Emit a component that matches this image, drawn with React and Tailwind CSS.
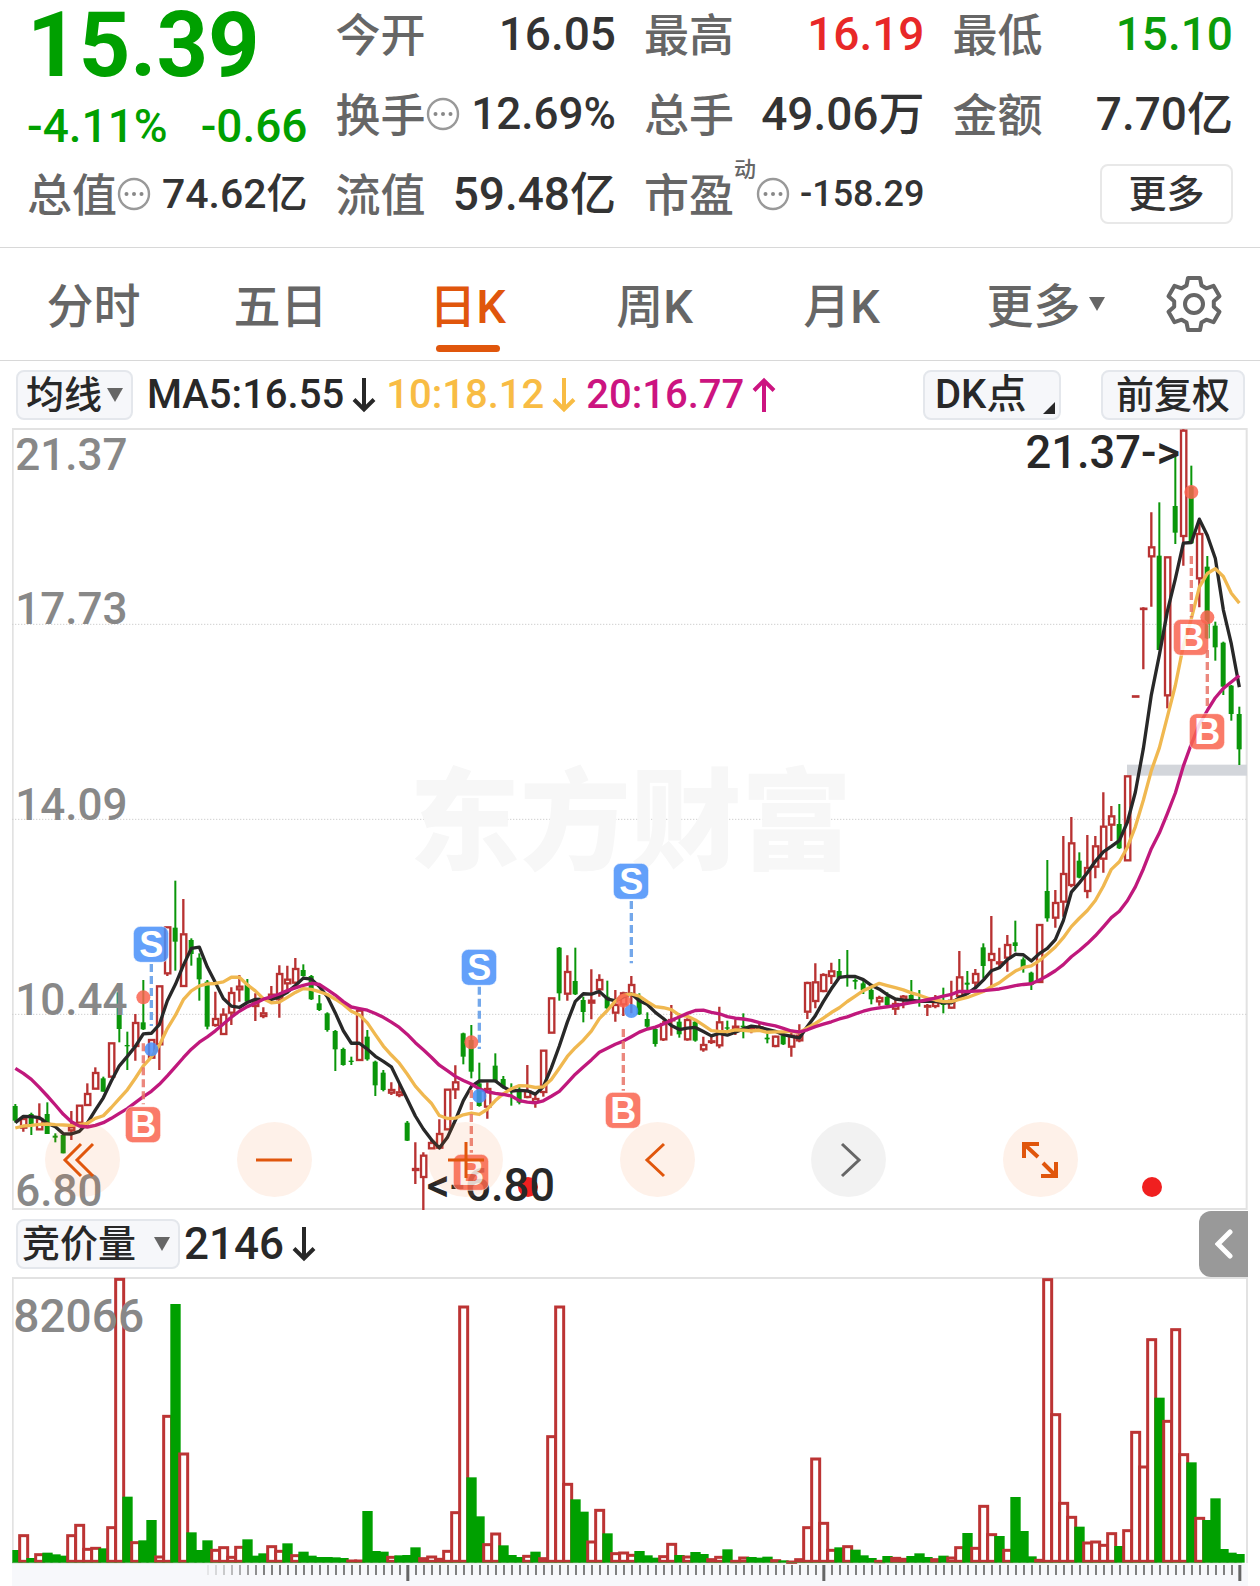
const UP = '#b83232'
const DOWN = '#0a960a'

// Chart space: one trading day is 24 units wide, y grows downwards.
const STEP = 24
const dayX = (i) => 46 + STEP * i

// [u = up / d = down, high, body top, body bottom, low]
const consolidation = [
  ['d', 762, 768, 812, 818], ['u', 800, 805, 835, 845], ['d', 788, 792, 826, 855], ['u', 760, 805, 840, 840],
  ['d', 757, 792, 852, 852], ['d', 850, 857, 863, 877], ['d', 850, 855, 910, 910], ['u', 783, 830, 843, 870],
  ['u', 765, 765, 820, 820], ['u', 700, 730, 767, 767], ['u', 652, 667, 718, 718], ['d', 680, 685, 725, 725],
  ['u', 578, 578, 682, 682], ['d', 427, 427, 537, 577], ['d', 545, 585, 589, 660], ['u', 492, 517, 590, 632],
  ['d', 390, 517, 538, 540], ['u', 568, 568, 625, 625], ['u', 407, 407, 585, 660], ['u', 230, 230, 372, 378],
  ['d', 92, 233, 275, 362], ['u', 147, 251, 410, 410], ['d', 265, 270, 312, 347], ['d', 310, 323, 388, 452],
  ['d', 390, 395, 530, 538], ['u', 425, 505, 527, 530], ['u', 475, 492, 554, 555], ['u', 412, 427, 490, 525],
  ['u', 375, 408, 420, 455], ['d', 387, 403, 455, 458], ['u', 430, 458, 470, 513], ['u', 472, 488, 500, 505],
  ['u', 408, 432, 445, 450], ['u', 346, 370, 450, 503], ['u', 347, 387, 402, 430], ['u', 324, 355, 400, 402],
  ['d', 343, 360, 378, 380], ['d', 375, 378, 448, 450], ['d', 435, 460, 480, 483], ['d', 487, 490, 540, 545],
  ['d', 540, 543, 598, 663], ['d', 593, 597, 645, 647], ['d', 620, 632, 636, 645], ['u', 480, 480, 632, 632],
  ['d', 540, 560, 628, 632], ['d', 632, 635, 706, 738], ['d', 660, 668, 720, 724], ['u', 697, 718, 730, 735],
  ['u', 700, 725, 737, 742], ['d', 813, 818, 872, 873], ['u', 877, 955, 962, 1002], ['u', 907, 915, 983, 1080],
  ['u', 865, 877, 897, 897], ['u', 808, 850, 895, 897], ['u', 717, 717, 840, 840], ['u', 646, 695, 720, 747],
  ['d', 548, 550, 620, 643], ['d', 525, 570, 665, 685], ['d', 638, 700, 768, 770], ['u', 697, 715, 772, 806],
  ['d', 610, 647, 695, 697], ['d', 678, 687, 712, 715], ['d', 700, 715, 725, 767], ['d', 705, 720, 758, 763],
  ['u', 645, 722, 743, 745], ['u', 728, 745, 758, 773], ['u', 600, 600, 728, 740], ['u', 443, 443, 550, 550],
  ['d', 291, 293, 430, 452], ['u', 316, 364, 433, 452], ['d', 293, 393, 433, 435], ['d', 440, 450, 486, 517],
  ['u', 358, 450, 460, 508], ['u', 373, 388, 420, 440], ['d', 392, 440, 475, 478], ['u', 420, 463, 490, 515],
  ['u', 425, 428, 465, 498], ['u', 378, 403, 435, 490], ['d', 430, 440, 493, 495], ['d', 487, 507, 530, 535],
  ['d', 530, 537, 582, 590], ['u', 512, 520, 570, 573], ['u', 465, 508, 512, 557], ['d', 490, 515, 553, 563],
  ['u', 505, 508, 570, 572], ['d', 510, 515, 572, 575], ['u', 560, 583, 600, 605], ['u', 555, 572, 578, 582],
  ['u', 470, 515, 588, 595], ['d', 512, 532, 536, 550], ['u', 508, 528, 538, 555], ['d', 490, 527, 532, 565],
  ['u', 525, 532, 542, 550], ['u', 515, 530, 538, 545], ['d', 540, 563, 568, 580], ['u', 557, 558, 590, 592],
  ['d', 550, 556, 583, 585], ['u', 545, 555, 592, 620], ['u', 523, 555, 573, 577], ['u', 395, 397, 487, 507],
  ['u', 340, 395, 455, 475], ['u', 370, 373, 425, 427], ['u', 338, 362, 380, 402], ['d', 327, 363, 385, 387],
  ['d', 300, 378, 382, 410], ['d', 385, 390, 395, 418], ['d', 393, 400, 420, 432], ['d', 408, 420, 448, 463],
  ['u', 437, 442, 456, 467], ['d', 427, 440, 465, 467], ['u', 450, 460, 478, 495], ['u', 435, 438, 450, 475],
]
const climb = [
  ['d', 690, 735, 750, 755], ['d', 720, 750, 756, 770], ['u', 762, 766, 772, 798], ['u', 735, 755, 770, 775],
  ['d', 713, 755, 765, 790], ['u', 692, 750, 775, 776], ['u', 603, 680, 740, 742], ['d', 663, 698, 704, 720],
  ['u', 657, 670, 700, 715], ['d', 580, 592, 648, 685], ['u', 498, 610, 632, 708], ['u', 593, 635, 642, 655],
  ['u', 555, 583, 625, 665], ['d', 512, 577, 588, 605], ['d', 622, 628, 655, 668], ['d', 665, 668, 705, 720],
  ['u', 523, 523, 698, 698], ['d', 330, 423, 505, 515], ['u', 420, 457, 505, 533], ['u', 258, 370, 457, 500],
  ['u', 201, 278, 407, 412], ['d', 307, 332, 383, 385], ['u', 255, 352, 425, 445], ['u', 258, 287, 352, 385],
  ['u', 127, 228, 328, 368], ['u', 168, 197, 226, 273], ['d', 162, 222, 295, 297], ['u', 77, 77, 333, 333],
]
const spike = [
  ['u', 827, 827, 831, 831], ['u', 562, 564, 568, 748], ['u', 277, 380, 411, 560], ['d', 247, 407, 690, 690],
  ['u', 410, 410, 828, 865], ['d', 105, 258, 338, 372], ['u', 28, 30, 350, 437], ['d', 137, 200, 370, 372],
  ['u', 305, 340, 477, 562], ['d', 408, 440, 655, 657], ['d', 605, 617, 682, 722], ['d', 665, 668, 800, 825],
  ['d', 795, 797, 882, 902], ['d', 860, 882, 988, 1035],
]

const shift = (rows, dy) => rows.map(([dir, ...ys]) => [dir, ...ys.map((y) => y + dy)])
const candles = [...shift(consolidation, 1266), ...shift(climb, 966), ...shift(spike, -24)]
const closes = candles.map(([dir, , top, bottom]) => (dir === 'u' ? top : bottom))

// The first days have no full window, so their averages are given.
const average = (days, seed) =>
  closes.map((_, i) => {
    if (i < seed.length) return seed[i] + 1266
    const span = closes.slice(i - days + 1, i + 1)
    return span.reduce((a, b) => a + b, 0) / days
  })

const averages = [
  { color: '#282828', values: average(5, [818, 799, 800, 803]) },
  { color: '#f0b850', values: average(10, [834, 828, 826, 823, 822, 824, 825, 826, 824]) },
  {
    color: '#c0187c',
    values: average(20, [655, 670, 688, 712, 738, 765, 793, 815, 828, 831, 826, 818, 805, 790, 776, 758, 740, 724, 703]),
  },
]

const signals = [
  { day: 17, type: 'S', box: 1549, from: 1608, to: 1794, dot: 1864 },
  { day: 16, type: 'B', box: 2090, from: 1846, to: 2029, dot: 1708 },
  { day: 58, type: 'S', box: 1618, from: 1676, to: 1863, dot: 2004 },
  { day: 57, type: 'B', box: 2233, from: 1986, to: 2174, dot: 1843 },
  { day: 77, type: 'S', box: 1360, from: 1419, to: 1606, dot: 1749 },
  { day: 76, type: 'B', box: 2047, from: 1803, to: 1988, dot: 1718 },
  { day: 147, type: 'B', box: 628, from: 384, to: 568, dot: 192 },
  { day: 149, type: 'B', box: 911, from: 666, to: 846, dot: 568 },
]

const priceLabels = [
  ['21.37', 126],
  ['17.73', 588],
  ['14.09', 1176],
  ['10.44', 1761],
  ['6.80', 2334],
]

const volumes = `d1050 u1003 d1074 u1060 d1058 d1063 d1067 u1003 u972 u1044 u1041 d1045 u979 u234 d890 u1024 d1021 d960
u1067 u645 d312 u758 d997 d1050 d1021 u1047 u1039 u1068 u1038 d1018 d1067 d1060 u1036 u1050 d1030 u1063 d1055 d1067
d1071 d1071 d1072 d1074 u1079 u1079 d933 d1053 d1055 u1068 d1066 d1065 d1042 u1072 u1067 u1074 u1050 u934 u317 d832
d949 u1030 u998 d1036 d1065 d1071 u1065 d1055 u1072 u706 u317 u849 d898 d935 u1022 u927 d1000 u1057 u1055 u1062
d1053 d1066 d1073 u1066 u1029 d1065 u1067 d1056 d1062 u1075 u1068 d1048 u1080 u1070 d1071 d1073 d1070 u1078 d1081
u1082 u1075 u979 u773 u966 u1047 d1042 u1036 d1049 d1066 d1074 u1080 d1068 u1071 u1074 d1068 d1060 d1071 u1075
d1067 u1070 u1039 d999 u1041 u915 u1000 d1008 u1047 d891 d993 d1069 u1077 u235 u640 u906 u948 d980 u1025 u1022
u1032 u997 d1038 u988 u693 u797 u415 d593 u660 u385 u760 d787 u951 d960 d895 d1047 d1058 d1062`
  .split(/\s+/)
  .map((v) => ({ up: v[0] === 'u', top: Number(v.slice(1)) }))

const tabs = ['分时', '五日', '日K', '周K', '月K']

function InfoIcon() {
  return (
    <svg viewBox="0 0 34 34" className="size-[34px] shrink-0" aria-hidden="true">
      <circle cx="17" cy="17" r="15" fill="none" stroke="#999" strokeWidth="2.4" />
      <circle cx="9.500" cy="17" r="2" fill="#888" />
      <circle cx="17" cy="17" r="2" fill="#888" />
      <circle cx="24.500" cy="17" r="2" fill="#888" />
    </svg>
  )
}

function Arrow({ up }) {
  return (
    <svg viewBox="0 0 24 36" className="ml-2 h-9 w-6 shrink-0" fill="none" stroke="currentColor" strokeWidth="4" aria-hidden="true">
      <path d={up ? 'M12 35V3M2 13.500 12 3.500l10 10' : 'M12 1v32M2 22.500 12 32.500l10-10'} />
    </svg>
  )
}

function Quote({ label, sup, info, value, className }) {
  return (
    <div className="flex items-center justify-between whitespace-nowrap">
      <dt className="flex items-center text-[45px] leading-none text-[#666]">
        <span className="pt-1">{label}</span>
        {sup && <sup className="self-start text-[22px] leading-none">{sup}</sup>}
        {info && <InfoIcon />}
      </dt>
      <dd className={className}>{value}</dd>
    </div>
  )
}

function Header() {
  return (
    <header className="grid grid-cols-4 grid-rows-[64px_96px_64px] gap-x-7 border-b border-[#d8d8d8] px-[27px] pt-[2px] pb-[21px] leading-none text-[#333]">
      <div className="row-span-2 text-[#00a000]">
        <p className="flex h-[88px] items-center text-[90px] font-bold leading-[88px]">15.39</p>
        <p className="flex h-[72px] items-center justify-between text-[46px] leading-none">
          <span>-4.11%</span>
          <span>-0.66</span>
        </p>
      </div>
      <Quote label="今开" value="16.05" className="text-[46px]" />
      <Quote label="最高" value="16.19" className="text-[46px] text-[#e82828]" />
      <Quote label="最低" value="15.10" className="text-[46px] text-[#0a9c0a]" />
      <Quote label="换手" info value="12.69%" className="text-[44px]" />
      <Quote label="总手" value="49.06万" className="text-[46px]" />
      <Quote label="金额" value="7.70亿" className="text-[46px]" />
      <Quote label="总值" info value="74.62亿" className="text-[41px]" />
      <Quote label="流值" value="59.48亿" className="text-[46px]" />
      <Quote label="市盈" sup="动" info value="-158.29" className="text-[36px]" />
      <button className="h-[60px] w-[133px] self-center justify-self-end rounded-lg border-2 border-[#e8e8e8] text-[38px] leading-none">
        更多
      </button>
    </header>
  )
}

function Tabs() {
  return (
    <nav className="grid h-[113px] grid-cols-[187fr_187fr_187fr_187fr_187fr_221fr_76fr_28fr] border-b border-[#d8d8d8] text-[47px] leading-none text-[#666]">
      {tabs.map((tab) => (
        <button
          key={tab}
          className={tab === '日K' ? 'relative pt-1 text-[#e0560c]' : 'pt-1'}
          aria-current={tab === '日K' ? 'page' : undefined}
        >
          {tab}
          {tab === '日K' && (
            <span className="absolute bottom-2 left-1/2 h-[7px] w-16 -translate-x-1/2 rounded-full bg-[#e0560c]" />
          )}
        </button>
      ))}
      <button className="flex items-center justify-center gap-2 pt-1" aria-haspopup="menu">
        更多
        <svg viewBox="0 0 16 14" className="mb-1 h-[14px] w-4" aria-hidden="true">
          <path d="M0 0h16L8 14z" fill="#666" />
        </svg>
      </button>
      <button className="flex items-center justify-center" aria-label="设置">
        <svg viewBox="-29 -29 58 58" className="size-[58px] shrink-0" fill="none" stroke="#666" strokeWidth="4" strokeLinejoin="round">
          <path d="M-6-26H6L7.500-18.500 12.300-15.700 19.500-18.200 25.500-7.800 19.800-2.800V2.800L25.500 7.800 19.500 18.200 12.300 15.700 7.500 18.500 6 26H-6L-7.500 18.500-12.300 15.700-19.500 18.200-25.500 7.800-19.800 2.800V-2.800L-25.500-7.800-19.500-18.200-12.300-15.700-7.500-18.500Z" />
          <circle r="9" />
        </svg>
      </button>
    </nav>
  )
}

function Picker({ label, options, className }) {
  return (
    <div className="relative">
      <select
        aria-label={label}
        className={`h-[50px] appearance-none rounded-lg border-2 border-[#e4e7ec] bg-[#f6f7fa] text-[38px] leading-none ${className}`}
      >
        {options.map((o) => (
          <option key={o}>{o}</option>
        ))}
      </select>
      <svg viewBox="0 0 16 14" className="pointer-events-none absolute right-[10px] top-[18px] h-[14px] w-4" aria-hidden="true">
        <path d="M0 0h16L8 14z" fill="#666" />
      </svg>
    </div>
  )
}

function IndicatorBar() {
  return (
    <div className="flex h-[67px] items-center pl-4 pr-[15px] text-[40px] leading-none text-[#282828] whitespace-nowrap">
      <Picker label="主图指标" options={['均线', '布林']} className="w-[117px] pl-2" />
      <span className="ml-[14px] flex items-center">MA5:16.55<Arrow /></span>
      <span className="ml-[10px] flex items-center text-[#f8bc44]">10:18.12<Arrow /></span>
      <span className="ml-[10px] flex items-center text-[#cc1480]">20:16.77<Arrow up /></span>
      <button className="ml-auto flex h-[50px] w-[138px] items-center justify-between rounded-lg border-2 border-[#e4e7ec] bg-[#f6f7fa] pl-[10px] pr-1 text-[40px]" aria-haspopup="menu">
        DK点
        <svg viewBox="0 0 12 12" className="mb-1 size-3 self-end" aria-hidden="true">
          <path d="M12 0v12H0z" fill="#282828" />
        </svg>
      </button>
      <button className="ml-10 h-[50px] w-[144px] rounded-lg border-2 border-[#e4e7ec] bg-[#f6f7fa] text-[38px]">前复权</button>
    </div>
  )
}

function Candle({ day, candle }) {
  const [dir, high, top, bottom, low] = candle
  const x = dayX(day)
  if (dir === 'd') {
    return (
      <g fill={DOWN}>
        <rect x={x - 3} y={high} width="6" height={low - high} />
        <rect x={x - 8} y={top} width="15" height={bottom - top} />
      </g>
    )
  }
  return (
    <g stroke={UP} strokeWidth="7" fill="none">
      <path d={`M${x} ${high}V${top}M${x} ${bottom}V${low}`} />
      <rect x={x - 7} y={top + 2} width="16" height={Math.max(bottom - top - 4, 1)} />
    </g>
  )
}

function Signal({ day, type, box, from, to, dot }) {
  const x = dayX(day)
  const buy = type === 'B'
  const color = buy ? '#fa6450' : '#4890fa'
  return (
    <g opacity="0.850">
      <path d={`M${x} ${from}V${to}`} stroke={buy ? '#e87468' : '#5c9ae8'} strokeWidth="10" strokeDasharray="24 12" />
      <circle cx={x} cy={dot} r="21" fill={color} />
      <rect x={x - 54} y={box - 54} width="106" height="108" rx="22" fill={color} stroke="#fff" strokeWidth="2" />
      <text x={x} y={box + 38} textAnchor="middle" fontSize="108" fontWeight="700" fill="#fff" className="font-['Liberation_Sans',sans-serif]">
        {type}
      </text>
    </g>
  )
}

const round = 'flex size-[75px] items-center justify-center rounded-full'

function ChartControls() {
  return (
    <div className="absolute bottom-[13px] left-[33px] right-[170px] flex justify-between text-[#e0560c]">
      <button className={`${round} bg-[#fa7828]/10`} aria-label="最早">
        <svg viewBox="0 0 36 36" className="mr-2 size-9" fill="none" stroke="currentColor" strokeWidth="3">
          <path d="M20 2 4 18l16 16M32 2 16 18l16 16" />
        </svg>
      </button>
      <button className={`${round} bg-[#fa7828]/10`} aria-label="缩小">
        <svg viewBox="0 0 36 36" className="size-9" stroke="currentColor" strokeWidth="3">
          <path d="M0 18h36" />
        </svg>
      </button>
      <button className={`${round} bg-[#fa7828]/10`} aria-label="放大">
        <svg viewBox="0 0 36 36" className="size-9" stroke="currentColor" strokeWidth="3">
          <path d="M0 18h36M18 0v36" />
        </svg>
      </button>
      <button className={`${round} bg-[#fa7828]/10`} aria-label="左移">
        <svg viewBox="0 0 36 36" className="size-9" fill="none" stroke="currentColor" strokeWidth="3">
          <path d="M25 2 8 18l17 16" />
        </svg>
      </button>
      <button className={`${round} bg-black/5 text-[#666]`} aria-label="右移">
        <svg viewBox="0 0 36 36" className="size-9" fill="none" stroke="currentColor" strokeWidth="3">
          <path d="M11 2l17 16-17 16" />
        </svg>
      </button>
      <button className={`${round} bg-[#fa7828]/10`} aria-label="全屏">
        <svg viewBox="0 0 36 36" className="size-9" fill="none" stroke="currentColor" strokeWidth="4">
          <path d="M2 16V2h15M2 2l14 13M34 20v14H19M34 34 21 21" />
        </svg>
      </button>
    </div>
  )
}

function PriceChart() {
  return (
    <section className="relative mx-3">
      <svg viewBox="36 0 3708 2346" className="block h-auto w-full" role="img" aria-label="日K线图">
        <rect x="38" y="3" width="3702" height="2340" fill="none" stroke="#e2e2e2" strokeWidth="6" />
        <path d="M36 589H3744M36 1174H3744M36 1759H3744" stroke="#cfcfcf" strokeWidth="3" strokeDasharray="4 5" />
        <text x="1892" y="1300" textAnchor="middle" fontSize="332" fontWeight="900" fill="#f7f7f7">东方财富</text>
        <rect x="3381" y="1010" width="360" height="33" fill="#d3d6db" />
        {candles.map((c, i) => (
          <Candle key={i} day={i} candle={c} />
        ))}
        {averages.map(({ color, values }) => (
          <polyline
            key={color}
            points={values.map((v, i) => `${dayX(i)},${v}`).join(' ')}
            fill="none"
            stroke={color}
            strokeWidth="10"
            strokeLinejoin="round"
          />
        ))}
        <circle cx="1584" cy="2277" r="30" fill="#f02020" />
        <circle cx="3456" cy="2277" r="30" fill="#f02020" />
        <g fontSize="132" fill="#888">
          {priceLabels.map(([label, y]) => (
            <text key={label} x="46" y={y}>{label}</text>
          ))}
        </g>
        <g fontSize="136" fill="#282828">
          <text x="3540" y="120" textAnchor="end">21.37-&gt;</text>
          <text x="1280" y="2318">&lt;-6.80</text>
        </g>
        {signals.map((s) => (
          <Signal key={s.day} {...s} />
        ))}
      </svg>
      <ChartControls />
    </section>
  )
}

function VolumeBar() {
  return (
    <div className="ml-4 mr-3 flex h-[67px] items-center text-[44px] leading-none text-[#282828]">
      <Picker label="副图指标" options={['竞价量', '成交量']} className="w-[164px] pl-1" />
      <span className="ml-1 flex items-center">2146<Arrow /></span>
      <button className="ml-auto flex h-[66px] w-[49px] items-center justify-center rounded-l-xl bg-[#999]" aria-label="展开">
        <svg viewBox="0 0 18 30" className="h-[30px] w-[18px]" fill="none" stroke="#fff" strokeWidth="5" strokeLinecap="round">
          <path d="M15 3 3 15l12 12" />
        </svg>
      </button>
    </div>
  )
}

function VolumeChart() {
  return (
    <section className="mx-3">
      <svg viewBox="36 231 3708 927" className="block h-auto w-full" role="img" aria-label="竞价量">
        <path d="M38 1090V234H3741V1090" fill="none" stroke="#e2e2e2" strokeWidth="6" />
        <rect x="36" y="1090" width="3708" height="68" fill="#f7f8fb" />
        {volumes.map(({ up, top }, i) =>
          up ? (
            <rect key={i} x={dayX(i) - 11} y={top + 4} width="24" height={Math.max(1080 - top, 1)} fill="#fff" stroke="#bc3434" strokeWidth="9" />
          ) : (
            <rect key={i} x={Math.max(dayX(i) - 15, 37)} y={top} width="31" height={1088 - top} fill="#00a000" />
          ),
        )}
        <path d="M36 1088H3726" stroke="#3c9c3c" strokeWidth="2" />
        {volumes.slice(24).map((_, k) => {
          const day = k + 24
          const major = day === 49 || day === 101 || day === 153
          return (
            <rect
              key={day}
              x={dayX(day) - (major ? 3 : 1)}
              y="1095"
              width={major ? 9 : 6}
              height={major ? 48 : 30}
              fill={major ? '#666' : '#808080'}
              opacity={Math.min(1, 0.15 + k * 0.12)}
            />
          )
        })}
        <text x="40" y="397" fontSize="138" fill="#888">82066</text>
      </svg>
    </section>
  )
}

export default function App() {
  return (
    <main className="bg-white font-['Roboto','Noto_Sans_CJK_SC',sans-serif] font-medium">
      <Header />
      <Tabs />
      <IndicatorBar />
      <PriceChart />
      <VolumeBar />
      <VolumeChart />
    </main>
  )
}
